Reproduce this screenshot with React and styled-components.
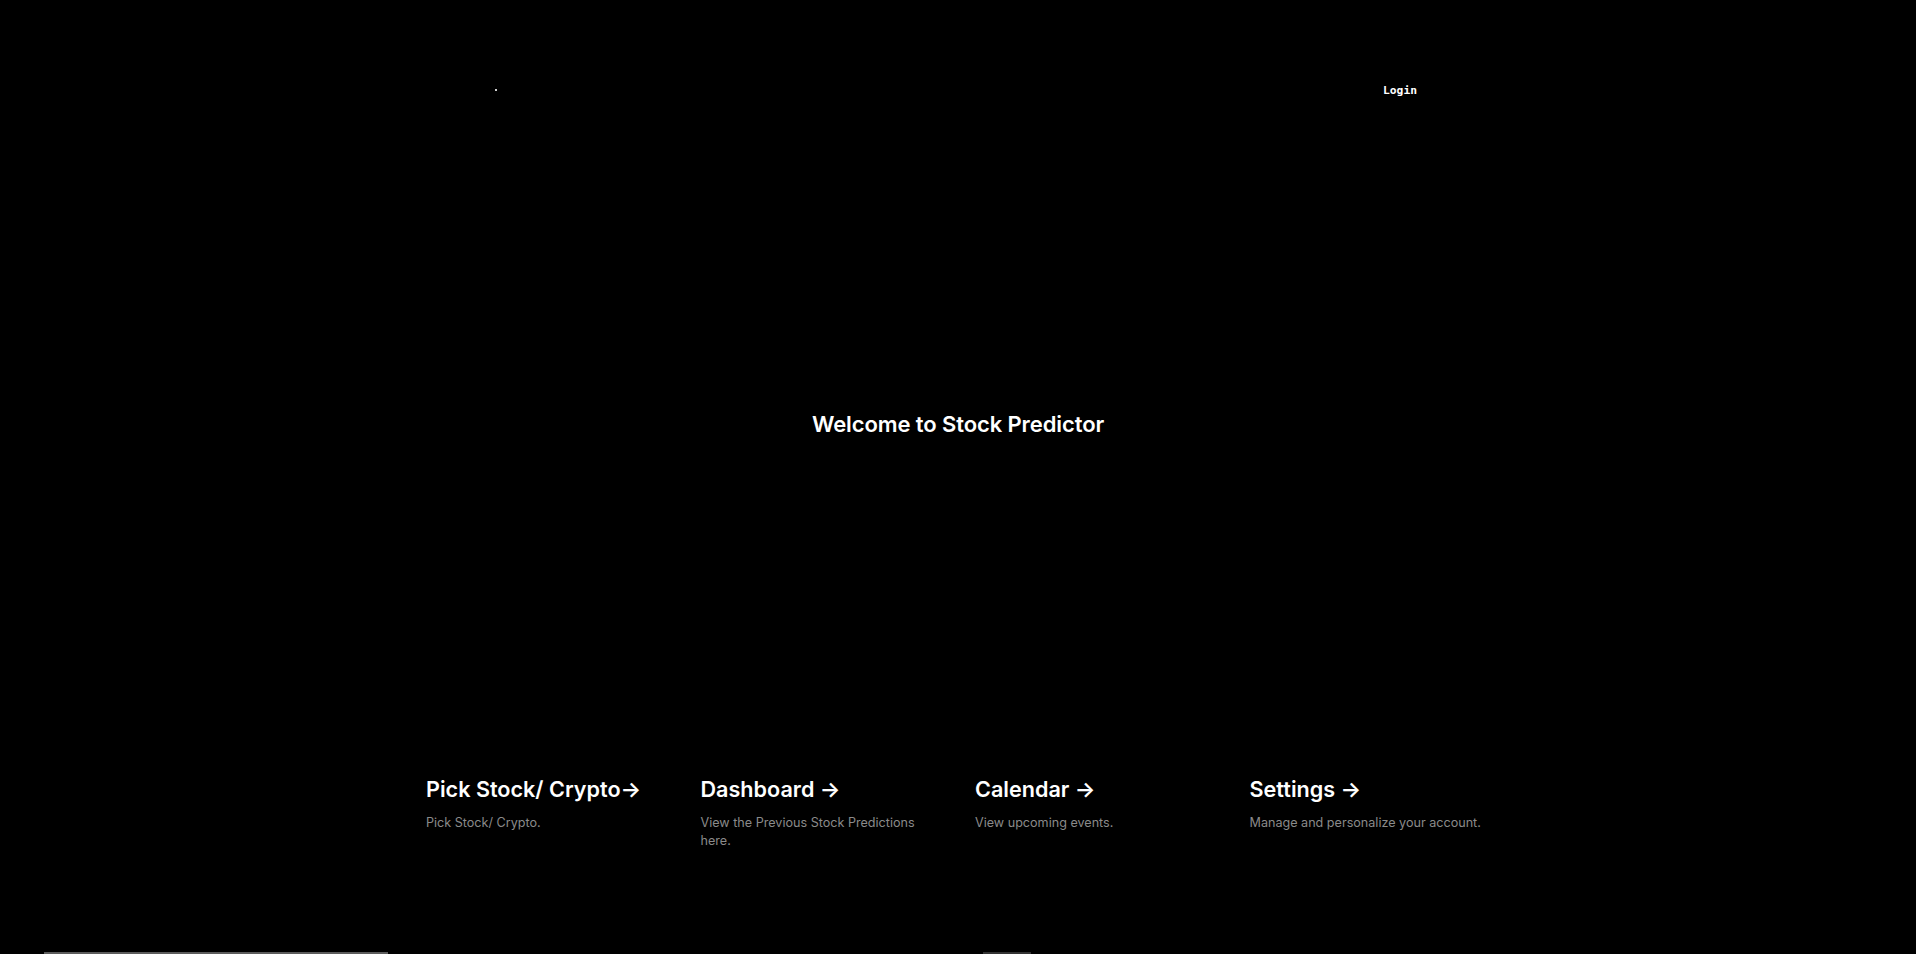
import React from 'react'
import styled, { createGlobalStyle } from 'styled-components'

const GlobalStyle = createGlobalStyle`
  html, body {
    margin: 0;
    padding: 0;
    background: #000;
    color: #fff;
    font-family: Inter, "Liberation Sans", sans-serif;
    overflow: hidden;
  }
`

const Main = styled.main`
  height: 100vh;
  display: flex;
  flex-direction: column;
`

const Header = styled.header`
  width: 1100px;
  margin: 0 auto;
  box-sizing: border-box;
  padding: 80px 91px 0 87px;
  height: 100px;
  display: flex;
  align-items: center;
  justify-content: space-between;
`

const Dot = styled.span`
  width: 2px;
  height: 2px;
  background: #cfcfcf;
`

const LoginButton = styled.button`
  background: none;
  border: none;
  padding: 0;
  color: #fff;
  font-family: "DejaVu Sans Mono", monospace;
  font-weight: bold;
  font-size: 11.3px;
  cursor: pointer;
`

const Hero = styled.section`
  flex: 1;
  display: flex;
  align-items: center;
  justify-content: center;
  padding-bottom: 12px;
`

const Title = styled.h1`
  margin: 0;
  font-size: 22px;
  font-weight: 600;
  letter-spacing: -0.1px;
`

const Grid = styled.div`
  width: 1098px;
  margin: 0 auto;
  display: grid;
  grid-template-columns: repeat(4, 1fr);
`

const Card = styled.a`
  display: block;
  padding: 16px 19px 16px 17px;
  color: inherit;
  text-decoration: none;
`

const CardTitle = styled.h2`
  margin: 0 0 11px;
  font-size: 21.6px;
  line-height: 28px;
  font-weight: 600;
`

const CardText = styled.p`
  margin: 0;
  max-width: 237px;
  font-size: 12.6px;
  line-height: 18px;
  color: #8a8a8a;
`

const Footer = styled.footer`
  height: 88px;
  display: flex;
  align-items: flex-end;
  padding-left: 44px;
`

const Bar = styled.div`
  height: 2px;
  width: ${p => p.w}px;
  margin-left: ${p => p.offset || 0}px;
  background: ${p => p.color};
`

const cards = [
  { title: 'Pick Stock/ Crypto\u2192', text: 'Pick Stock/ Crypto.' },
  { title: 'Dashboard \u2192', text: 'View the Previous Stock Predictions here.' },
  { title: 'Calendar \u2192', text: 'View upcoming events.' },
  { title: 'Settings \u2192', text: 'Manage and personalize your account.' },
]

export default function App() {
  return (
    <>
      <GlobalStyle />
      <Main>
        <Header>
          <Dot />
          <LoginButton>Login</LoginButton>
        </Header>
        <Hero>
          <Title>Welcome to Stock Predictor</Title>
        </Hero>
        <Grid>
          {cards.map(c => (
            <Card key={c.title} href="#">
              <CardTitle>{c.title}</CardTitle>
              <CardText>{c.text}</CardText>
            </Card>
          ))}
        </Grid>
        <Footer>
          <Bar w={344} color="#5c5c5c" />
          <Bar w={48} offset={595} color="#333" />
        </Footer>
      </Main>
    </>
  )
}
